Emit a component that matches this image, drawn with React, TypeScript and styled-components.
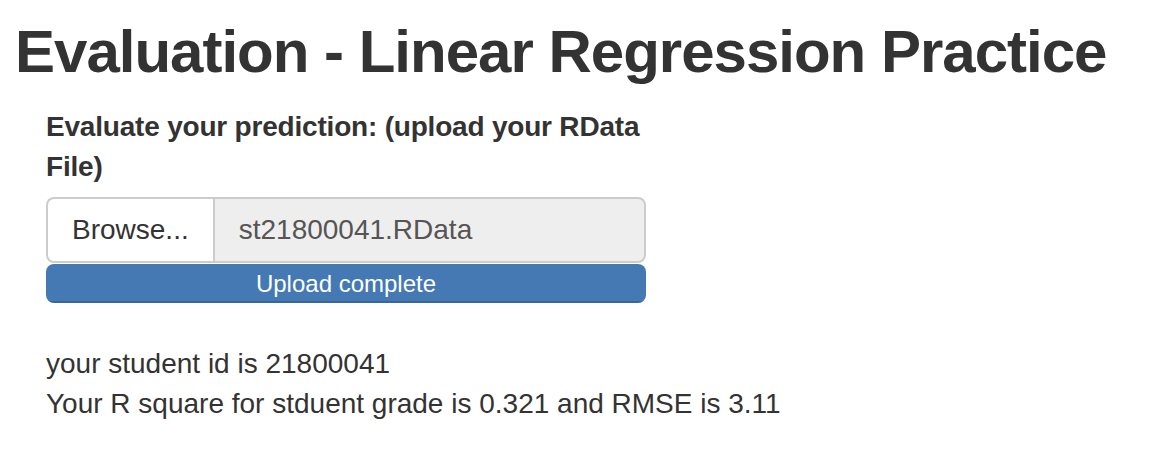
import React from "react";
import styled, { createGlobalStyle } from "styled-components";

const GlobalStyle = createGlobalStyle`
  html, body {
    margin: 0;
    padding: 0;
    background: #fff;
  }
  body {
    font-family: "Liberation Sans", Arial, Helvetica, sans-serif;
    color: #333;
    font-size: 28px;
    line-height: 40px;
  }
  * {
    box-sizing: border-box;
  }
`;

const Page = styled.div`
  padding: 0 15px;
`;

const Title = styled.h2`
  margin: 19px 0 22px;
  font-size: 60px;
  line-height: 66px;
  font-weight: 700;
  letter-spacing: -1px;
  color: #333;
`;

const Panel = styled.div`
  margin-left: 31px;
`;

const InputContainer = styled.div`
  width: 600px;
`;

const Label = styled.label`
  display: block;
  font-weight: 700;
  font-size: 28px;
  line-height: 40px;
  letter-spacing: -0.2px;
  margin-bottom: 10px;
`;

const InputGroup = styled.div`
  display: flex;
  height: 66px;
`;

const BrowseButton = styled.span`
  display: flex;
  align-items: center;
  padding: 0 24px;
  background: #fff;
  border: 2px solid #ccc;
  border-right: none;
  border-radius: 8px 0 0 8px;
  color: #333;
  font-size: 28px;
`;

const FileName = styled.div`
  flex: 1;
  display: flex;
  align-items: center;
  padding: 0 24px;
  background: #eee;
  border: 2px solid #ccc;
  border-radius: 0 8px 8px 0;
  color: #555;
  font-size: 28px;
`;

const Progress = styled.div`
  margin-top: 1px;
  height: 39px;
  border-radius: 8px;
  overflow: hidden;
  background: #f5f5f5;
`;

const ProgressBar = styled.div`
  height: 100%;
  background: #4479b3;
  box-shadow: inset 0 -2px 0 rgba(0, 0, 0, 0.15);
  color: #fff;
  font-size: 24px;
  line-height: 39px;
  text-align: center;
`;

const Output = styled.div`
  margin-top: 41px;
  font-size: 28px;
  line-height: 40px;
  color: #333;
`;

export default function App() {
  const progress = 100;
  return (
    <>
      <GlobalStyle />
      <Page>
        <Title>Evaluation - Linear Regression Practice</Title>
        <Panel>
          <InputContainer>
            <Label>Evaluate your prediction: (upload your RData File)</Label>
            <InputGroup>
              <BrowseButton>Browse...</BrowseButton>
              <FileName>st21800041.RData</FileName>
            </InputGroup>
            <Progress>
              <ProgressBar style={{ width: `${progress}%` }}>Upload complete</ProgressBar>
            </Progress>
          </InputContainer>
          <Output>
            <div>your student id is 21800041</div>
            <div>Your R square for stduent grade is 0.321 and RMSE is 3.11</div>
          </Output>
        </Panel>
      </Page>
    </>
  );
}
